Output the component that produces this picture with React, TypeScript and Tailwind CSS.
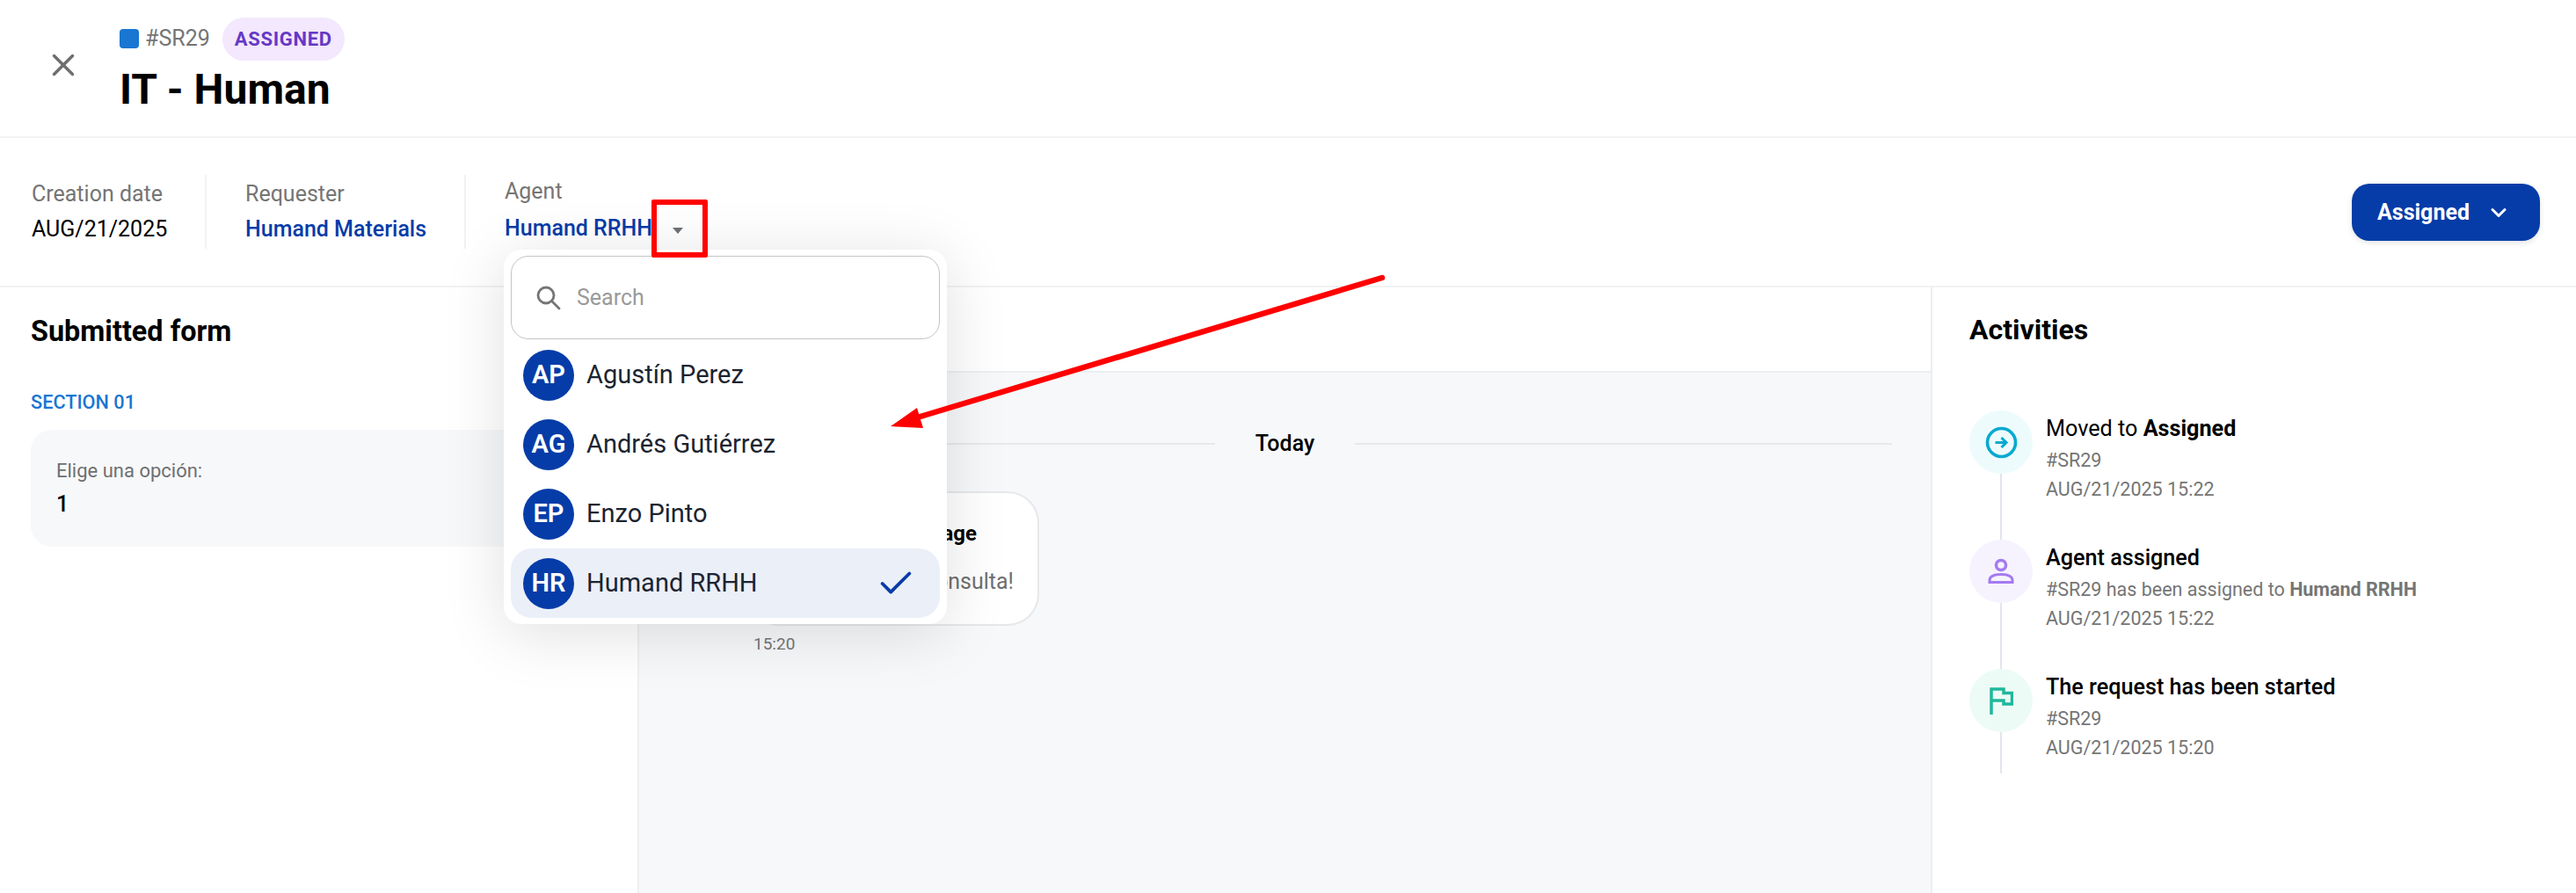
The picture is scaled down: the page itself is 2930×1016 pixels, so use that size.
import { Check, ChevronDown, X } from 'lucide-react';

const AGENTS = [
  { initials: 'AP', name: 'Agustín Perez' },
  { initials: 'AG', name: 'Andrés Gutiérrez' },
  { initials: 'EP', name: 'Enzo Pinto' },
  { initials: 'HR', name: 'Humand RRHH', selected: true },
];

function SearchGlyph() {
  return (
    <svg width="28" height="28" viewBox="0 0 28 28" fill="none" stroke="#757575" strokeWidth="2.8" strokeLinecap="round">
      <circle cx="11" cy="11" r="9" />
      <path d="M18 18l8 8" />
    </svg>
  );
}

function MoveIcon() {
  return (
    <svg width="37" height="37" viewBox="0 0 37 37" fill="none" stroke="#05a9d0" strokeWidth="3.6">
      <circle cx="18.500" cy="18.500" r="16" />
      <path d="M11.500 18.500h12.500M18.500 13l5.500 5.500-5.500 5.500" strokeWidth="3" />
    </svg>
  );
}

function PersonIcon() {
  return (
    <svg width="30" height="30" viewBox="0 0 30 30" fill="none" stroke="#a47bf0">
      <circle cx="15" cy="8" r="5.500" strokeWidth="3.500" />
      <path d="M2 27.500v-2c0-5 6-7 13-7s13 2 13 7v2z" strokeWidth="3" />
    </svg>
  );
}

function FlagIcon() {
  return (
    <svg width="27" height="31" viewBox="0 0 27 31" fill="none" stroke="#1fb89c" strokeWidth="3.500">
      <path d="M2 31V2h14v4.500h9.500v12.500H16v-4H2" />
    </svg>
  );
}

const ACTIVITIES = [
  {
    icon: <MoveIcon />,
    bg: 'bg-[#edfbfd]',
    title: (
      <>
        Moved to <b className="font-bold">Assigned</b>
      </>
    ),
    sub: '#SR29',
    date: 'AUG/21/2025 15:22',
  },
  {
    icon: <PersonIcon />,
    bg: 'bg-[#f6f3ff]',
    title: <span className="font-medium">Agent assigned</span>,
    sub: (
      <>
        #SR29 has been assigned to <b className="font-bold">Humand RRHH</b>
      </>
    ),
    date: 'AUG/21/2025 15:22',
  },
  {
    icon: <FlagIcon />,
    bg: 'bg-[#ecfbf6]',
    title: <span className="font-medium">The request has been started</span>,
    sub: '#SR29',
    date: 'AUG/21/2025 15:20',
  },
];

export default function App() {
  return (
    <div className="relative flex h-[1016px] w-[2930px] flex-col overflow-hidden bg-white font-['Roboto',sans-serif] text-black">
      <header className="flex h-[157px] shrink-0 items-start border-b-2 border-[#f1f2f4] pt-[19px]">
        <div className="flex w-[136px] justify-center pt-[34px] pl-[8px]">
          <X size={42} strokeWidth={2} className="text-[#6f6f6f]" />
        </div>
        <div className="flex flex-col">
          <div className="flex h-[50px] items-center">
            <span className="h-[22px] w-[22px] rounded-[4px] bg-[#1976d2]" />
            <span className="ml-[7px] text-[25px] text-[#757575]">#SR29</span>
            <span className="ml-[14px] flex h-[49px] w-[139px] items-center justify-center rounded-full bg-[#f3e8fd] text-[22px] font-bold tracking-[0.7px] text-[#6639c5]">
              ASSIGNED
            </span>
          </div>
          <h1 className="mt-[8px] text-[48px] leading-[50px] font-bold">IT - Human</h1>
        </div>
      </header>

      <section className="flex h-[170px] shrink-0 items-center justify-between border-b-2 border-[#f1f2f4] pr-[41px] pl-[36px]">
        <div className="flex items-center">
          <div className="flex h-[84px] w-[199px] flex-col justify-center gap-[8px] border-r-2 border-[#f1f2f4]">
            <span className="text-[25px] leading-[32px] text-[#757575]">Creation date</span>
            <span className="text-[25px] leading-[32px] text-black">AUG/21/2025</span>
          </div>
          <div className="flex h-[84px] w-[295px] flex-col justify-center gap-[8px] border-r-2 border-[#f1f2f4] pl-[44px]">
            <span className="text-[25px] leading-[32px] text-[#757575]">Requester</span>
            <span className="text-[25px] leading-[32px] font-medium text-[#063ca8]">Humand Materials</span>
          </div>
          <div className="flex h-[84px] flex-col justify-center gap-[10px] pl-[44px]">
            <span className="-mt-[4px] text-[25px] leading-[32px] text-[#757575]">Agent</span>
            <div className="flex items-center">
              <span className="text-[25px] leading-[32px] font-medium text-[#063ca8]">Humand RRHH</span>
              <span className="mt-[4px] ml-[23px] h-0 w-0 border-x-[6px] border-t-[7px] border-x-transparent border-t-[#6f7378]" />
            </div>
          </div>
        </div>
        <button className="flex h-[65px] w-[214px] items-center rounded-[20px] bg-[#063ca8] pt-[2px] pl-[29px] text-[25px] font-bold text-white shadow-[0_2px_6px_rgba(0,0,0,0.12)]">
          Assigned
          <ChevronDown size={28} strokeWidth={2.6} className="ml-[19px]" />
        </button>
      </section>

      <main className="flex min-h-0 flex-1">
        <aside className="w-[727px] shrink-0 border-r-2 border-[#eceef1] pl-[35px]">
          <h2 className="mt-[30px] text-[32.400px] leading-[40px] font-bold">Submitted form</h2>
          <div className="mt-[48px] text-[21.700px] leading-[26px] font-medium text-[#1976d2]">SECTION 01</div>
          <div className="mt-[18px] mr-[24px] h-[133px] rounded-[24px] bg-[#f7f8fa] pt-[33px] pl-[29px]">
            <div className="text-[22px] leading-[28px] text-[#6f6f6f]">Elige una opción:</div>
            <div className="mt-[9px] text-[25px] leading-[30px] font-medium">1</div>
          </div>
        </aside>

        <div className="flex min-w-0 flex-1 flex-col">
          <div className="h-[97px] shrink-0 border-b-2 border-[#eceef1]" />
          <div className="flex-1 bg-[#f6f8fa] px-[44px]">
            <div className="mt-[65px] flex items-center">
              <div className="h-[2px] flex-1 bg-[#e6e8eb]" />
              <span className="mx-[46px] text-[25px] leading-[32px] font-medium">Today</span>
              <div className="h-[2px] flex-1 bg-[#e6e8eb]" />
            </div>
            <div className="mt-[38px] ml-[79px] flex w-[332px] flex-col">
              <div className="flex h-[153px] flex-col items-end rounded-[36px] border-2 border-[#e6e8eb] bg-white pt-[31px] pr-[27px]">
                <span className="mr-[42px] text-[24px] leading-[30px] font-bold whitespace-nowrap">First message</span>
                <span className="mt-[25px] text-[25px] leading-[30px] whitespace-nowrap text-[#6f6f6f]">¡Hola! Tengo una consulta!</span>
              </div>
              <span className="mt-[9px] ml-[7px] text-[19px] leading-[24px] text-[#757575]">15:20</span>
            </div>
          </div>
        </div>

        <aside className="w-[734px] shrink-0 border-l-2 border-[#eceef1] pl-[42px]">
          <h2 className="mt-[28px] text-[32px] leading-[40px] font-bold">Activities</h2>
          <div className="relative mt-[72px] flex flex-col gap-[75px]">
            <div className="absolute top-[36px] left-[35px] h-[377px] w-[2px] bg-[#e3e5ec]" />
            {ACTIVITIES.map((item, i) => (
              <div key={i} className="relative flex h-[72px] gap-[15px]">
                <div className={`flex h-[72px] w-[72px] shrink-0 items-center justify-center rounded-full ${item.bg}`}>
                  {item.icon}
                </div>
                <div className="mt-[2px] flex flex-col">
                  <div className="text-[25.200px] leading-[38px]">{item.title}</div>
                  <div className="text-[21.500px] leading-[33px] text-[#757575]">{item.sub}</div>
                  <div className="text-[21.500px] leading-[33px] text-[#757575]">{item.date}</div>
                </div>
              </div>
            ))}
          </div>
        </aside>
      </main>

      {/* agent dropdown */}
      <div className="absolute top-[284px] left-[573px] h-[426px] w-[504px] rounded-[20px] bg-white px-[8px] pt-[7px] shadow-[0_10px_70px_rgba(0,0,0,0.13)]">
        <div className="flex h-[95px] items-center rounded-[20px] border border-[#c4c4c4] pl-[28px]">
          <SearchGlyph />
          <span className="ml-[18px] text-[25px] text-[#9a9a9a]">Search</span>
        </div>
        <div className="mt-[1px] flex flex-col">
          {AGENTS.map((agent) => (
            <div
              key={agent.initials}
              className={`flex h-[79px] items-center rounded-[24px] pr-[27px] pl-[14px] ${agent.selected ? 'bg-[#ebeff8]' : ''}`}
            >
              <span className="flex h-[58px] w-[58px] items-center justify-center rounded-full bg-[#063ca8] text-[29px] font-semibold text-white">
                {agent.initials}
              </span>
              <span className="ml-[14px] flex-1 text-[29px] text-[#1b2430]">{agent.name}</span>
              {agent.selected && <Check size={46} strokeWidth={2} className="text-[#063ca8]" />}
            </div>
          ))}
        </div>
      </div>

      {/* screenshot annotations */}
      <div className="absolute top-[227px] left-[741px] h-[66px] w-[64px] rounded-[2px] border-[6px] border-[#ff0000]" />
      <svg className="absolute top-0 left-0" width="2930" height="1016" fill="none">
        <path d="M1572 316 1040 476" stroke="#ff0000" strokeWidth="6.500" strokeLinecap="round" />
        <path d="M1013 485 1043 464 1050 487z" fill="#ff0000" />
      </svg>
    </div>
  );
}
